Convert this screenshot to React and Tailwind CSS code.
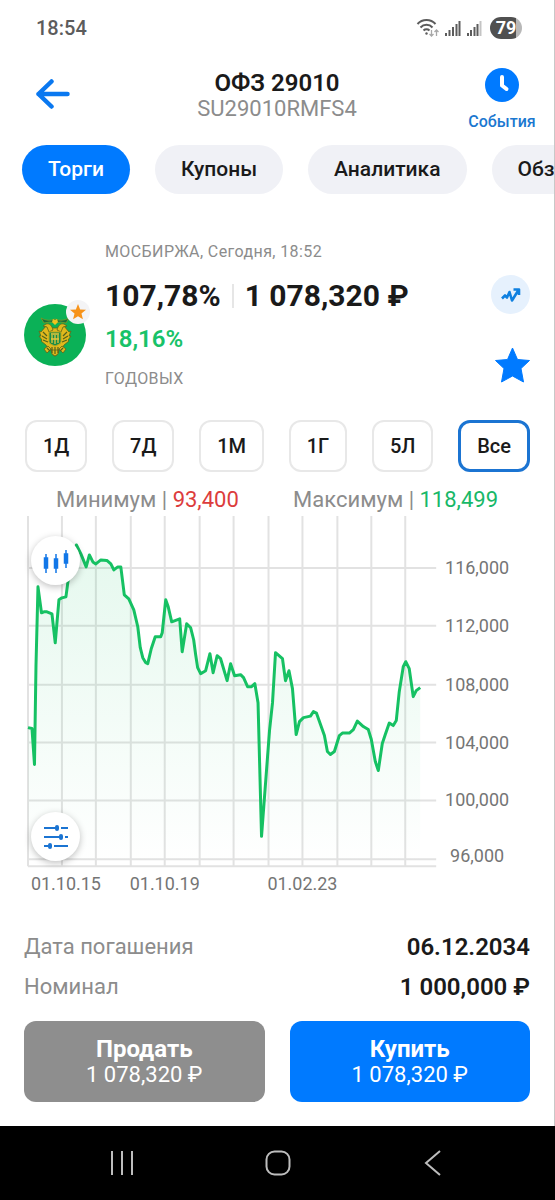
import React, { useState } from "react";

const tabs = ["Торги", "Купоны", "Аналитика", "Обзор"];
const periods = ["1Д", "7Д", "1М", "1Г", "5Л", "Все"];

const gridX = [4, 38, 72, 107, 141, 176, 210, 245, 279, 314, 348, 382];
const gridY = [52, 110, 169, 227, 285, 344, 351];

const priceLabels = [
  { y: 52, text: "116,000" },
  { y: 110, text: "112,000" },
  { y: 169, text: "108,000" },
  { y: 227, text: "104,000" },
  { y: 285, text: "100,000" },
  { y: 341, text: "96,000" },
];

const dateLabels = [
  { x: 42, text: "01.10.15" },
  { x: 141, text: "01.10.19" },
  { x: 279, text: "01.02.23" },
];

const points = [
  [4, 212], [8, 213], [10.5, 249], [12, 150], [14, 71], [17.5, 97], [20, 96], [23, 96], [28, 98],
  [31.3, 127], [35, 84], [38, 82], [42, 81], [44, 66], [48, 44], [52.5, 29], [57, 38], [62.3, 51],
  [65.5, 39], [69, 46], [72, 48], [77, 44], [83, 44.5], [87, 48], [90, 54], [94, 51], [97, 51],
  [100.5, 79], [105, 83], [110, 94], [114, 111], [116.5, 132], [119, 142], [122, 147], [124, 148],
  [127.5, 133], [131.5, 121], [137, 121], [138.5, 117], [142, 84], [144.5, 91], [148, 106],
  [156, 103], [158.5, 136], [163, 108], [167, 112], [170, 124], [172, 139], [174, 152], [177, 158],
  [182, 155], [186.3, 138], [189.5, 157], [193.5, 140], [197, 143], [203.5, 165], [207, 148],
  [211, 160], [217, 159], [220, 162], [224, 171], [228, 171], [231.3, 168], [234.5, 187],
  [238, 321], [246, 215], [249, 187], [252, 137], [259, 143], [262, 165], [265.5, 155], [269, 173],
  [272.7, 219], [276, 206], [280, 202], [287, 200.5], [290, 196], [293, 197.5], [301, 220],
  [304, 236], [307, 239], [311, 236], [316, 220], [319, 217.5], [326, 217.5], [330, 214], [334, 205.5],
  [340, 211], [345, 214], [348, 224], [352, 246], [355, 255], [359, 228], [362, 219], [366, 207.5],
  [370, 210], [373, 205], [376, 176], [380, 151], [382.5, 146], [386, 153], [390, 181], [393, 175],
  [397, 172],
];

const linePath = "M" + points.map((p) => p.join(" ")).join("L");

function StatusBar() {
  return (
    <div className="flex h-14 items-center justify-between pr-8 pl-9 text-[#5c5c5c]">
      <span className="text-xl font-medium">18:54</span>
      <div className="flex items-center gap-1">
        <svg width="24" height="22" viewBox="0 0 24 22" fill="none" stroke="#5c5c5c" strokeWidth="2">
          <path d="M1.5 7a12 12 0 0 1 18 0M4.5 10.5a8 8 0 0 1 12 0M7.5 13.5a4.4 4.4 0 0 1 6 0" />
          <circle cx="10.5" cy="16.5" r="1.2" fill="#5c5c5c" stroke="none" />
          <path
            d="M15.5 13v6M13.5 17l2 2 2-2M20.5 19v-6M18.5 15l2-2 2 2"
            stroke="#a8a8a8"
            strokeWidth="1.3"
          />
        </svg>
        <svg width="17" height="18" viewBox="0 0 17 18" stroke="#5c5c5c" strokeWidth="2">
          <path d="M2 17v-3M5.5 17v-6M9 17V8M12.5 17V5M15.5 17V2" />
        </svg>
        <svg width="17" height="18" viewBox="0 0 17 18" stroke="#5c5c5c" strokeWidth="2">
          <path d="M3 17v-3M6 17v-6M9.500 17V8M12.5 17V5" />
          <path d="M15.5 17V2" stroke="#c4c4c4" />
        </svg>
        <span className="ml-1 flex h-[22px] w-8 items-center justify-center rounded-full bg-[linear-gradient(90deg,#505050_80%,#b8b8b8_80%)] text-lg font-bold text-white">
          79
        </span>
      </div>
    </div>
  );
}

function Header() {
  return (
    <header className="grid h-20 grid-cols-[80px_1fr_80px] px-3">
      <button aria-label="Назад" className="flex items-center pb-1 pl-6">
        <svg width="34" height="30" viewBox="0 0 34 30" fill="none" stroke="#0a78f0" strokeWidth="4.5" strokeLinecap="round" strokeLinejoin="round">
          <path d="M15.5 2.5 2.5 15l13 12.5M2.5 15h29" />
        </svg>
      </button>
      <div className="flex flex-col items-center pt-[13px]">
        <h1 className="text-2xl leading-7 font-semibold text-[#1a1a1a]">ОФЗ 29010</h1>
        <p className="text-[22px] leading-6 text-[#8c8c8c]">SU29010RMFS4</p>
      </div>
      <button className="flex flex-col items-center gap-2 pt-3 text-base font-medium text-[#1b78d0]">
        <svg width="34" height="34" viewBox="0 0 34 34">
          <circle cx="17" cy="17" r="17" fill="#007aff" />
          <path d="M17 9v8.5l4.5 3.5" fill="none" stroke="#fff" strokeWidth="4" strokeLinecap="round" strokeLinejoin="round" />
        </svg>
        События
      </button>
    </header>
  );
}

function Emblem() {
  return (
    <svg width="62" height="62" viewBox="0 0 62 62">
      <circle cx="31" cy="31" r="31" fill="#0bb157" />
      <g fill="#e0b91c" stroke="#5c641a" strokeWidth="0.8">
        <path d="M27 24 22 22l-5 6-2-1 2 5-2 0 3 4-1 1 5 4 2 4 4 1 1 5 2 1 2-1 1-5 4-1 2-4 5-4-1-1 3-4h-2l2-5-2 1-5-6-5 2z" />
        <path d="M29 26c-1-4-3-7-7-6l-3 2 4 1 2 5zM33 26c1-4 3-7 7-6l3 2-4 1-2 5z" />
        <path d="m20 45 4-3 3 3-4 4zM42 45l-4-3-3 3 4 4zM27 46h8l-1 4-3 2-3-2z" />
      </g>
      <path d="M19 28l4 4m-5 0 5 3m-4 1 5 2m19-10-4 4m5 0-5 3m4 1-5 2M28 43v6m3-6v7m3-7v6M23 44l3 3m13-3-3 3" stroke="#53601b" strokeWidth="1.2" />
      <path d="M17 14q7 4 14 1 7 3 14-1l-3 5q-6-2-11 0-5-2-11 0z" fill="#176d3c" stroke="#7d9c23" strokeWidth="0.8" />
      <path d="M28 18l1-3 2 1 2-1 1 3-3 3z" fill="#efc31e" />
      <path d="M25 28h12v10q0 2-6 4-6-2-6-4z" fill="#168c48" stroke="#b9a51f" strokeWidth="1" />
      <path d="M27 30h8M28 31v8m3-8v9m3-9v8M27 35h8" fill="none" stroke="#e6c63c" strokeWidth="1.3" />
    </svg>
  );
}

function Quote() {
  return (
    <section className="flex items-start gap-[19px] px-6 pt-11">
      <div className="relative mt-[66px] shrink-0">
        <Emblem />
        <span className="absolute -top-1 -right-1 flex size-6 items-center justify-center rounded-full bg-[#f4f4f6]">
          <svg width="16" height="16" viewBox="0 0 24 24" fill="#f7931a">
            <path d="m12 0 3.2 8.2 8.8.5-6.8 5.6 2.2 8.7L12 18.2 4.6 23l2.2-8.7L0 8.7l8.8-.5z" />
          </svg>
        </span>
      </div>
      <div className="flex-1">
        <p className="text-base leading-7 tracking-wide text-[#8c8c8c]">МОСБИРЖА, Сегодня, 18:52</p>
        <p className="mt-3 flex items-center gap-[11px] text-3xl font-bold whitespace-nowrap text-[#1a1a1a]">
          107,78%
          <span className="h-6 w-[2px] bg-[#e6e6e6]" />
          1 078,320 ₽
        </p>
        <p className="mt-[7px] text-2xl leading-9 font-semibold text-[#18c268]">18,16%</p>
        <p className="mt-2 text-base leading-7 tracking-wide text-[#8c8c8c]">ГОДОВЫХ</p>
      </div>
      <div className="flex flex-col items-center gap-[33px] pt-[37px]">
        <button aria-label="Тренд" className="flex size-[39px] items-center justify-center rounded-full bg-[#e6f1fd]">
          <svg width="20" height="16" viewBox="0 0 20 16" fill="none" stroke="#0f80e0" strokeWidth="2.6" strokeLinejoin="round">
            <path d="M1 11.500 4 8.500l2 2L8.500 5l2.5 8.500L17.500 3M12.500 2.500h5.500v5.500" />
          </svg>
        </button>
        <button aria-label="Избранное" className="-mr-1">
          <svg width="35" height="36" viewBox="0 0 35 36" fill="#007aff">
            <path
              d="m17.500 1 5 11.500 12 1L26 21.500l2.500 13.500-11-6-11 6L9 21.500l-8.500-8 12-1z"
              stroke="#007aff"
              strokeLinejoin="round"
            />
          </svg>
        </button>
      </div>
    </section>
  );
}

function Chart() {
  return (
    <div className="relative px-6">
      <svg viewBox="0 0 507 384" className="w-full font-[Roboto,sans-serif]" role="img" aria-label="График цены">
        <defs>
          <linearGradient id="area" x1="0" y1="0" x2="0" y2="1">
            <stop offset="0" stopColor="#12c263" stopOpacity="0.11" />
            <stop offset="1" stopColor="#12c263" stopOpacity="0" />
          </linearGradient>
        </defs>
        <g stroke="#e2e2e2" strokeWidth="2">
          {gridX.map((x) => (
            <path key={x} d={`M${x} 0V351`} />
          ))}
          {gridY.map((y) => (
            <path key={y} d={`M4 ${y}H413`} />
          ))}
        </g>
        <path d={`${linePath}V351H4Z`} fill="url(#area)" />
        <path d={linePath} fill="none" stroke="#16c163" strokeWidth="3" strokeLinejoin="round" />
        <g fill="#757575" fontSize="18" textAnchor="middle">
          {priceLabels.map((l) => (
            <text key={l.text} x="454" y={l.y + 6}>
              {l.text}
            </text>
          ))}
          {dateLabels.map((l) => (
            <text key={l.text} x={l.x} y="375">
              {l.text}
            </text>
          ))}
        </g>
      </svg>
      <button
        aria-label="Свечи"
        className="absolute top-5 left-[31px] flex size-[49px] items-center justify-center rounded-full bg-white shadow-[0_2px_7px_rgba(0,0,0,0.25)]"
      >
        <svg width="26" height="24" viewBox="0 0 26 24" fill="#1277e8" stroke="#1277e8" strokeWidth="1.5">
          <path d="M3 5v19M13 5v19M23 1v18" />
          <path d="M1.5 9h3v10h-3zM11.5 10h3v9h-3zM21.5 5h3v9h-3z" />
        </svg>
      </button>
      <button
        aria-label="Настройки"
        className="absolute top-[296px] left-[31px] flex size-[49px] items-center justify-center rounded-full bg-white shadow-[0_2px_7px_rgba(0,0,0,0.25)]"
      >
        <svg width="26" height="26" viewBox="0 0 26 26" stroke="#1b74d2" strokeWidth="2">
          <path d="M1 4h12M18 4h7M1 13h16M22 13h3M1 22h4M11 22h14" />
          <path d="M14 3v2M18 12v2M7 21v2" strokeWidth="4" strokeLinecap="round" />
        </svg>
      </button>
    </div>
  );
}

function NavBar() {
  return (
    <nav className="flex h-[74px] items-center justify-between bg-black px-[110px]">
      <button aria-label="Недавние">
        <svg width="24" height="26" viewBox="0 0 24 26" stroke="#bdbdbd" strokeWidth="2">
          <path d="M2 1v24M12 1v24M22 1v24" />
        </svg>
      </button>
      <button aria-label="Домой">
        <svg width="26" height="26" viewBox="0 0 26 26" fill="none" stroke="#bdbdbd" strokeWidth="2">
          <rect x="1.5" y="1.5" width="23" height="23" rx="8" />
        </svg>
      </button>
      <button aria-label="Назад">
        <svg width="24" height="26" viewBox="0 0 24 26" fill="none" stroke="#bdbdbd" strokeWidth="2">
          <path d="M19 1 5 13l14 12" />
        </svg>
      </button>
    </nav>
  );
}

function App() {
  const [tab, setTab] = useState("Торги");
  const [period, setPeriod] = useState("Все");

  return (
    <div className="flex min-h-screen flex-col bg-white font-[Roboto,sans-serif]">
      <main className="flex-1 border-r border-[#c8c8c8]">
        <StatusBar />
        <Header />

        {/* Tabs */}
        <div className="flex gap-[25px] overflow-x-auto pt-[9px] pl-[22px] [scrollbar-width:none]">
          {tabs.map((name) => (
            <button
              key={name}
              onClick={() => setTab(name)}
              className={`h-[49px] shrink-0 rounded-full px-[26px] text-[21px] font-medium ${
                tab === name ? "bg-[#007aff] text-white" : "bg-[#f0f1f6] text-[#1a1a1a]"
              }`}
            >
              {name}
            </button>
          ))}
        </div>

        <Quote />

        {/* Period switch */}
        <div className="flex justify-between pt-[27px] pr-6 pl-[25px]">
          {periods.map((name) => (
            <button
              key={name}
              onClick={() => setPeriod(name)}
              className={`h-[52px] rounded-xl px-4 text-xl font-medium text-[#1a1a1a] ${
                period === name ? "border-3 border-[#1b74d2]" : "border-2 border-[#e8e8e8]"
              }`}
            >
              {name}
            </button>
          ))}
        </div>

        <div className="flex justify-between px-14 pt-[14px] pb-[2px] text-[22px] leading-7 text-[#8c8c8c]">
          <p>
            Минимум | <span className="text-[#dc3c3c]">93,400</span>
          </p>
          <p>
            Максимум | <span className="text-[#18b868]">118,499</span>
          </p>
        </div>

        <Chart />

        <dl className="grid grid-cols-[auto_auto] items-center justify-between px-6 pt-7 text-[22px] leading-10">
          <dt className="text-[#8c8c8c]">Дата погашения</dt>
          <dd className="text-right text-2xl leading-10 font-semibold text-[#1a1a1a]">06.12.2034</dd>
          <dt className="text-[#8c8c8c]">Номинал</dt>
          <dd className="text-right text-2xl leading-10 font-semibold text-[#1a1a1a]">1 000,000 ₽</dd>
        </dl>

        <div className="grid grid-cols-2 gap-[25px] px-6 pt-[14px] pb-6">
          <button className="h-[81px] rounded-xl bg-[#8e8e8e] text-[22px] leading-[26px] text-white">
            <span className="block text-2xl leading-[26px] font-bold">Продать</span>1 078,320 ₽
          </button>
          <button className="h-[81px] rounded-xl bg-[#007aff] text-[22px] leading-[26px] text-white">
            <span className="block text-2xl leading-[26px] font-bold">Купить</span>1 078,320 ₽
          </button>
        </div>
      </main>
      <NavBar />
    </div>
  );
}

export default App;
